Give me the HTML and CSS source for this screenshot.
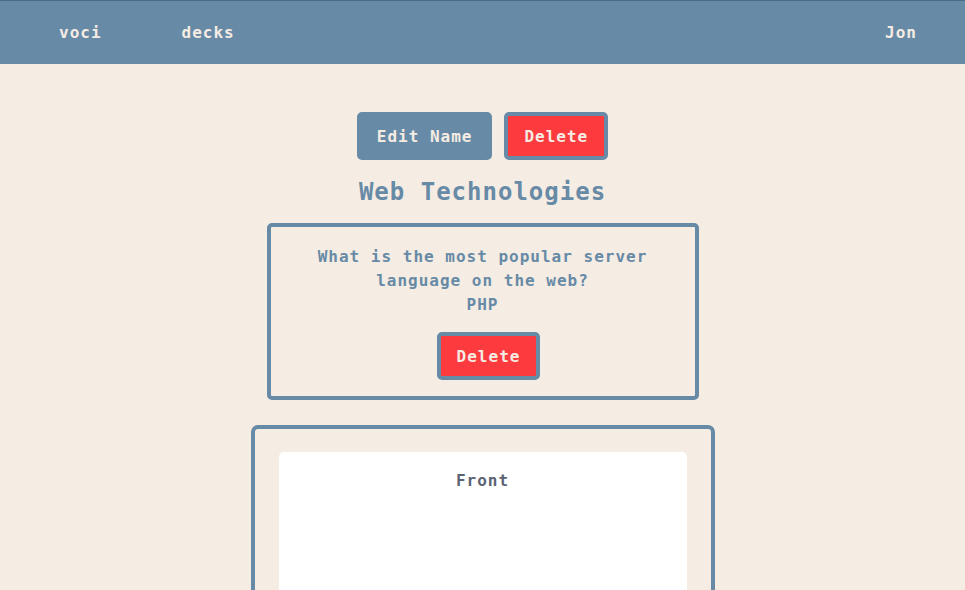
FILE: index.html
```html
<!DOCTYPE html>
<html lang="en">
<head>
<meta charset="utf-8">
<title>voci - Web Technologies</title>
<link rel="stylesheet" href="styles.css">
</head>
<body>
<nav class="nav">
  <div class="nav-left">
    <a class="nav-link" href="#">voci</a>
    <a class="nav-link" href="#">decks</a>
  </div>
  <a class="nav-link" href="#">Jon</a>
</nav>
<main class="main">
  <div class="actions">
    <button class="btn btn-blue">Edit Name</button>
    <button class="btn btn-red">Delete</button>
  </div>
  <h1 class="title">Web Technologies</h1>
  <section class="card">
    <p class="question">What is the most popular server language on the web?</p>
    <p class="answer">PHP</p>
    <button class="btn btn-red card-btn">Delete</button>
  </section>
  <section class="card-new">
    <div class="face">
      <div class="face-label">Front</div>
    </div>
  </section>
</main>
</body>
</html>
```
FILE: styles.css
```css
* { box-sizing: border-box; }
html, body { margin: 0; padding: 0; }
body {
  background: #f5ece3;
  font-family: "DejaVu Sans Mono", "Liberation Mono", monospace;
  font-weight: bold;
  letter-spacing: 1px;
  color: #678aa6;
  height: 590px;
  overflow: hidden;
}
.nav {
  height: 64px;
  background: #678aa6;
  border-top: 1px solid #4a6a87;
  display: flex;
  align-items: center;
  justify-content: space-between;
  padding: 0 48px 0 59px;
}
.nav-left { display: flex; gap: 80px; }
.nav-link {
  color: #f5ece3;
  text-decoration: none;
  font-size: 16px;
  line-height: 20px;
  margin-top: 1px;
}
.main {
  display: flex;
  flex-direction: column;
  align-items: center;
  padding-top: 48px;
}
.actions { display: flex; gap: 12px; }
.btn {
  font-family: inherit;
  font-weight: bold;
  letter-spacing: 1px;
  font-size: 16px;
  line-height: 20px;
  border: 4px solid #678aa6;
  border-radius: 5px;
  padding: 11px 16px 9px;
  color: #f5ece3;
  cursor: pointer;
}
.btn-blue { background: #678aa6; }
.btn-red { background: #fd3b3f; }
.title {
  font-size: 24px;
  line-height: 30px;
  margin: 17px 0 16px;
}
.card {
  width: 432px;
  border: 4px solid #678aa6;
  border-radius: 5px;
  padding: 18px 24px 16px;
  display: flex;
  flex-direction: column;
  align-items: center;
  text-align: center;
}
.question, .answer {
  margin: 0;
  font-size: 16px;
  line-height: 24px;
}
.card-btn { margin: 15px 0 0 12px; }
.card-new {
  width: 464px;
  margin-top: 25px;
  border: 4px solid #678aa6;
  border-radius: 7px;
  padding: 23px 24px 24px;
}
.face {
  background: #ffffff;
  border-radius: 5px;
  height: 300px;
  padding-top: 17px;
}
.face-label {
  text-align: center;
  color: #5a6274;
  font-size: 16px;
  line-height: 24px;
}
```
